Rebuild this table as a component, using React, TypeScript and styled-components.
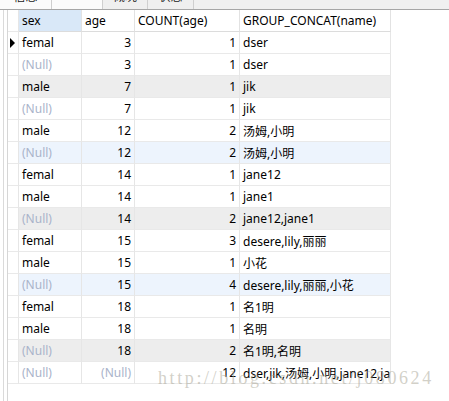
import React from "react";
import styled, { createGlobalStyle } from "styled-components";

const Global = createGlobalStyle`
  html, body { margin: 0; padding: 0; background: #ffffff; }
  body { font-family: "Noto Sans", "Noto Sans CJK SC", sans-serif; font-size: 12px; color: #000; }
`;

const Page = styled.div`
  position: relative;
  width: 449px;
  height: 401px;
  overflow: hidden;
  display: flex;
  flex-direction: column;
  background: #fff;
`;

const TabStrip = styled.div`
  height: 9px;
  flex: none;
  display: flex;
  background: #f0f0f0;
  border-bottom: 1px solid #a6a6a6;
`;

const Tab = styled.div<{ $w: number; $active?: boolean }>`
  width: ${(p) => p.$w}px;
  box-sizing: border-box;
  height: 9px;
  overflow: hidden;
  background: ${(p) => (p.$active ? "#fbfbfb" : "#efefef")};
  border-right: 1px solid #cfcfcf;
  display: flex;
  justify-content: center;
`;

const TabLabel = styled.span`
  font-family: "Noto Sans CJK SC", sans-serif;
  font-size: 12px;
  line-height: 12px;
  margin-top: -10px;
  color: #222;
`;

const Body = styled.div`
  flex: 1;
  display: flex;
  padding-left: 3px;
`;

const Frame = styled.div`
  flex: 1;
  display: flex;
  border-left: 1px solid #dadada;
  padding-left: 3px;
`;

const Grid = styled.div`
  display: grid;
  grid-template-columns: 11px 63px 53px 105px 151px;
  grid-auto-rows: 22px;
  align-content: start;
  border-left: 1px solid #d6d6d6;
  height: 100%;
`;

const Cell = styled.div<{ $bg?: string; $right?: boolean; $null?: boolean }>`
  box-sizing: border-box;
  border-right: 1px solid #e6e6e6;
  border-bottom: 1px solid #e9e9e9;
  background: ${(p) => p.$bg || "#fff"};
  color: ${(p) => (p.$null ? "#a9b3ca" : "#000")};
  display: flex;
  align-items: center;
  justify-content: ${(p) => (p.$right ? "flex-end" : "flex-start")};
  padding: 0 ${(p) => (p.$right ? "3px" : "0")} 0 ${(p) => (p.$right ? "0" : "3px")};
  white-space: nowrap;
  overflow: hidden;
  font-size: 12px;
`;

const HeadCell = styled(Cell)`
  border-bottom: 1px solid #dcdcdc;
  border-right: 1px solid #e2e2e2;
`;

const Indicator = styled.div`
  box-sizing: border-box;
  border-right: 1px solid #e6e6e6;
  border-bottom: 1px solid #e9e9e9;
  background: #fff;
  display: flex;
  align-items: center;
  justify-content: center;
`;

const Watermark = styled.div`
  position: absolute;
  left: 158px;
  top: 368px;
  font-family: "Liberation Serif", serif;
  font-size: 18px;
  line-height: 20px;
  letter-spacing: 2.6px;
  color: rgba(165, 162, 145, 0.5);
  white-space: nowrap;
  pointer-events: none;
`;

type Row = { sex: string | null; age: string | null; count: string; names: string; bg?: string };

const GRAY = "#ededed";
const BLUE = "#edf4fd";

const rows: Row[] = [
  { sex: "femal", age: "3", count: "1", names: "dser" },
  { sex: null, age: "3", count: "1", names: "dser" },
  { sex: "male", age: "7", count: "1", names: "jik", bg: GRAY },
  { sex: null, age: "7", count: "1", names: "jik" },
  { sex: "male", age: "12", count: "2", names: "汤姆,小明" },
  { sex: null, age: "12", count: "2", names: "汤姆,小明", bg: BLUE },
  { sex: "femal", age: "14", count: "1", names: "jane12" },
  { sex: "male", age: "14", count: "1", names: "jane1" },
  { sex: null, age: "14", count: "2", names: "jane12,jane1", bg: GRAY },
  { sex: "femal", age: "15", count: "3", names: "desere,lily,丽丽" },
  { sex: "male", age: "15", count: "1", names: "小花" },
  { sex: null, age: "15", count: "4", names: "desere,lily,丽丽,小花", bg: BLUE },
  { sex: "femal", age: "18", count: "1", names: "名1明" },
  { sex: "male", age: "18", count: "1", names: "名明" },
  { sex: null, age: "18", count: "2", names: "名1明,名明", bg: GRAY },
  { sex: null, age: null, count: "12", names: "dser,jik,汤姆,小明,jane12,jane1,desere,lily,丽丽,小花,名1明,名明" },
];

const Arrow = () => (
  <svg width="6" height="10" viewBox="0 0 6 10">
    <polygon points="0,0 5,5 0,10" fill="#000" />
  </svg>
);

export default function App() {
  return (
    <Page>
      <Global />
      <TabStrip>
        <Tab $w={52} $active>
          <TabLabel>信息</TabLabel>
        </Tab>
        <Tab $w={51} $active />
        <Tab $w={45}>
          <TabLabel>概况</TabLabel>
        </Tab>
        <Tab $w={46}>
          <TabLabel>状态</TabLabel>
        </Tab>
      </TabStrip>
      <Body>
        <Frame>
          <Grid>
            <Indicator />
            <HeadCell $bg="#d9e8f8">sex</HeadCell>
            <HeadCell>age</HeadCell>
            <HeadCell>COUNT(age)</HeadCell>
            <HeadCell>GROUP_CONCAT(name)</HeadCell>
            {rows.map((r, i) => (
              <React.Fragment key={i}>
                <Indicator>{i === 0 ? <Arrow /> : null}</Indicator>
                <Cell $bg={r.bg} $null={r.sex === null}>
                  {r.sex ?? "(Null)"}
                </Cell>
                <Cell $bg={r.bg} $right $null={r.age === null}>
                  {r.age ?? "(Null)"}
                </Cell>
                <Cell $bg={r.bg} $right>
                  {r.count}
                </Cell>
                <Cell $bg={r.bg}>{r.names}</Cell>
              </React.Fragment>
            ))}
          </Grid>
        </Frame>
      </Body>
      <Watermark>http://blog.csdn.net/j080624</Watermark>
    </Page>
  );
}
